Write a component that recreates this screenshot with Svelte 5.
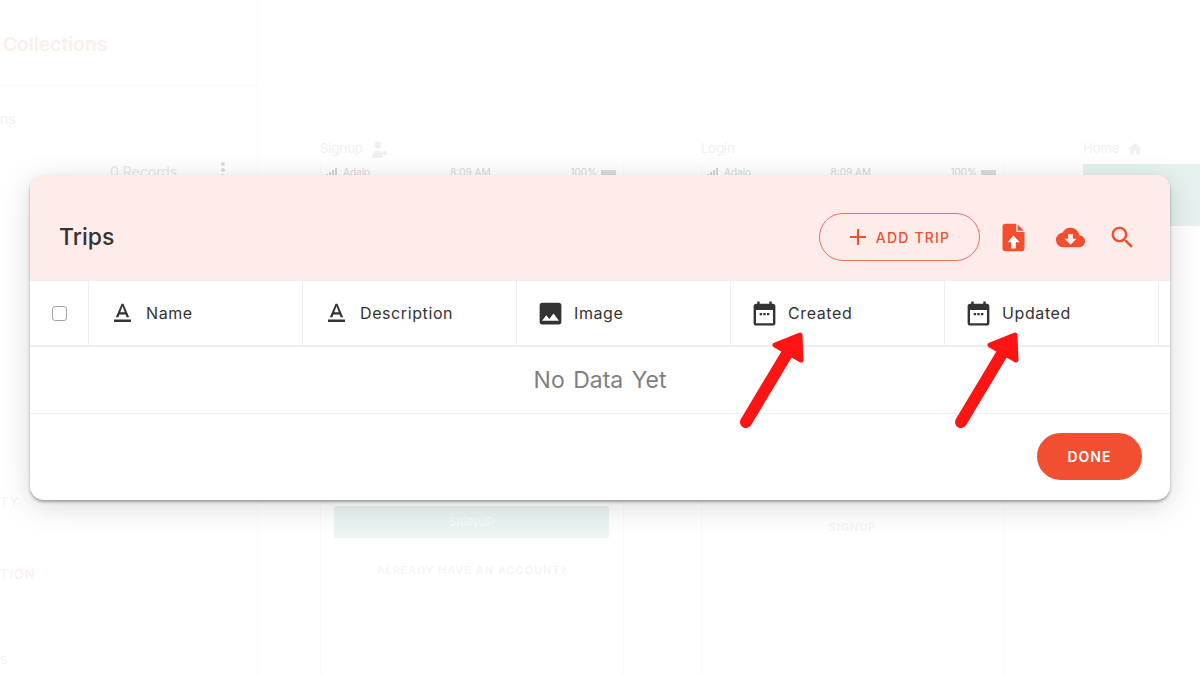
<script>
  const columns = [
    { label: 'Name', icon: 'text' },
    { label: 'Description', icon: 'text' },
    { label: 'Image', icon: 'image' },
    { label: 'Created', icon: 'date' },
    { label: 'Updated', icon: 'date' }
  ];
</script>

{#snippet status()}
  <div class="status">
    <span class="carrier">
      <svg width="13" height="8" viewBox="0 0 13 8" fill="#d4d4d4"><path d="M0 6h2v2H0zM3 4h2v4H3zM6 2h2v6H6zM9 0h2v8H9z"/></svg>
      Adalo
    </span>
    <span>8:09 AM</span>
    <span class="battery">100% <i></i></span>
  </div>
{/snippet}

<div class="page">
  <!-- washed out builder behind the modal -->
  <div class="backdrop">
    <aside class="sidebar">
      <div class="side-title">Collections</div>
      <div class="side-sub">ns</div>
      <div class="side-records">0 Records <span class="kebab"></span></div>
      <div class="side-red ty">TY</div>
      <div class="side-red tion">TION</div>
      <div class="side-sub s">S</div>
    </aside>
    <div class="canvas">
      <section class="screen signup">
        <div class="screen-name">
          Signup
          <svg width="18" height="18" viewBox="0 0 18 18" fill="#f0f0f0"><circle cx="7" cy="4" r="3.4"/><path d="M1 17c0-5 2.500-7.500 6-7.500S12 12 12 17z"/><circle cx="14" cy="12" r="2.500"/></svg>
        </div>
        <div class="frame">
          {@render status()}
          <div class="teal-btn">SIGNUP</div>
          <div class="ghost">ALREADY HAVE AN ACCOUNT?</div>
        </div>
      </section>
      <section class="screen login">
        <div class="screen-name">Login</div>
        <div class="frame">
          {@render status()}
          <div class="ghost login-signup">SIGNUP</div>
        </div>
      </section>
      <section class="screen home">
        <div class="screen-name">
          Home
          <svg width="16" height="16" viewBox="0 0 24 24" fill="#f0f0f0"><path d="M10 20v-6h4v6h5v-8h3L12 3 2 12h3v8z"/></svg>
        </div>
        <div class="frame home-frame"><div class="home-bar"></div></div>
      </section>
    </div>
  </div>

  <div class="overlay">
    <div class="modal">
      <header class="modal-head">
        <h2>Trips</h2>
        <button class="add">
          <svg width="18" height="18" viewBox="0 0 18 18"><path d="M9 1v16M1 9h16" stroke="currentColor" stroke-width="2" fill="none"/></svg>
          <span>ADD TRIP</span>
        </button>
        <svg class="act upload" width="33" height="33" viewBox="0 0 24 24">
          <path d="M14 2H6c-1.100 0-2 .9-2 2v16c0 1.100.9 2 2 2h12c1.100 0 2-.9 2-2V8h-6V2z" fill="#f34e2e"/>
          <path d="M15 2.500V7h4.500z" fill="#f34e2e"/>
          <path d="M12 10.500 7.600 15.500h2.700V20h3.400v-4.500h2.700z" fill="#fff"/>
        </svg>
        <svg class="act cloud" width="29" height="29" viewBox="0 0 24 24">
          <path d="M19.350 10.040C18.670 6.590 15.640 4 12 4 9.110 4 6.600 5.640 5.350 8.040 2.340 8.360 0 10.910 0 14c0 3.310 2.690 6 6 6h13c2.760 0 5-2.240 5-5 0-2.640-2.050-4.780-4.650-4.960zM17 13l-5 5-5-5h3V9h4v4h3z" fill="#f34e2e"/>
        </svg>
        <svg class="act search" width="29" height="29" viewBox="0 0 24 24">
          <path d="M15.500 14h-.79l-.28-.27C15.410 12.590 16 11.110 16 9.500 16 5.910 13.090 3 9.500 3S3 5.910 3 9.500 5.910 16 9.500 16c1.610 0 3.090-.59 4.230-1.570l.27.28v.79l5 4.990L20.490 19l-4.990-5zm-6 0C7.010 14 5 11.990 5 9.500S7.010 5 9.500 5 14 7.010 14 9.500 11.990 14 9.500 14z" fill="#f34e2e"/>
        </svg>
      </header>

      <div class="cols">
        <div class="check-cell"><span class="check"></span></div>
        {#each columns as col}
          <div class="col">
            <svg width="29" height="29" viewBox="0 0 24 24" fill="#333">
              {#if col.icon === 'text'}
                <path d="M5 17v2h14v-2H5zm4.500-4.200h5l.9 2.200h2.100L12.750 4h-1.500L6.500 15h2.100l.9-2.200zM12 5.980 13.870 11h-3.740L12 5.980z"/>
              {:else if col.icon === 'image'}
                <path d="M21 19V5c0-1.100-.9-2-2-2H5c-1.100 0-2 .9-2 2v14c0 1.100.9 2 2 2h14c1.100 0 2-.9 2-2zM8.500 13.500l2.500 3.010L14.500 12l4.500 6H5l3.500-4.500z"/>
              {:else}
                <path d="M19 4h-1V2h-2v2H8V2H6v2H5c-1.110 0-2 .9-2 2v14c0 1.100.89 2 2 2h14c1.100 0 2-.9 2-2V6c0-1.100-.9-2-2-2zm0 16H5V9h14v11z"/>
                <path d="M8 11.500h2v2H8zM11 11.500h2v2h-2zM14 11.500h2v2h-2z"/>
              {/if}
            </svg>
            <span>{col.label}</span>
          </div>
        {/each}
      </div>

      <div class="empty">No Data Yet</div>

      <footer class="modal-foot">
        <button class="done">DONE</button>
      </footer>
    </div>
  </div>

  <!-- annotation arrows drawn over the screenshot -->
  <svg class="arrows" width="1200" height="675" viewBox="0 0 1200 675">
    <g fill="#ff1414" stroke="#ff1414" stroke-linejoin="round" stroke-linecap="round">
      <path d="M746 422 788 352" stroke-width="12" fill="none"/>
      <path d="M775 345 800 335 801 360z" stroke-width="5"/>
      <path d="M961 422 1003 352" stroke-width="12" fill="none"/>
      <path d="M990 345 1015 335 1016 360z" stroke-width="5"/>
    </g>
  </svg>
</div>

<style>
  :global(body) { margin: 0; background: #fff; }
  .page { position: relative; width: 1200px; height: 675px; overflow: hidden; background: #fff; font-family: Inter, "Liberation Sans", sans-serif; }

  .backdrop { display: flex; height: 100%; color: #f1f1f1; }
  .sidebar { width: 257px; flex: none; border-right: 1px solid #fafafa; display: flex; flex-direction: column; }
  .side-title { height: 85px; line-height: 90px; padding-left: 3px; font-size: 19px; font-weight: 600; letter-spacing: .1px; color: #fdeeec; border-bottom: 1px solid #fafafa; }
  .side-sub { margin-top: 24px; font-size: 14px; color: #f0f0f0; }
  .side-records { margin: 36px 0 0 110px; font-size: 14px; display: flex; gap: 44px; color: #e8e8e8; }
  .kebab { width: 4px; height: 4px; margin-top: -1px; border-radius: 50%; background: #ddd; box-shadow: 0 6px 0 #ddd, 0 12px 0 #ddd; }
  .side-red { font-size: 13px; letter-spacing: 1px; color: #fdeeec; }
  .ty { margin-top: 314px; }
  .tion { margin-top: 56px; }
  .s { margin-top: 71px; font-size: 11px; }

  .canvas { flex: 1; display: flex; padding-top: 141px; padding-left: 62px; }
  .screen { flex: none; }
  .signup { width: 304px; margin-right: 77px; }
  .login { width: 303px; margin-right: 79px; }
  .home { width: 200px; }
  .screen-name { height: 23px; display: flex; gap: 8px; align-items: flex-start; font-size: 13px; line-height: 15px; color: #f0f0f0; }
  .frame { height: 520px; border-left: 1px solid #fafafa; border-right: 1px solid #fafafa; display: flex; flex-direction: column; }
  .status { display: flex; justify-content: space-between; padding: 2px 7px 0 5px; font-size: 10px; color: #d8d8d8; }
  .carrier, .battery { display: flex; align-items: center; gap: 4px; }
  .battery i { width: 15px; height: 5px; background: #dcdcdc; }
  .teal-btn { margin: 328px 14px 0 13px; height: 32px; line-height: 32px; text-align: center; background: #e9f4f3; color: #fafafa; font-size: 12px; border-radius: 2px; }
  .ghost { margin-top: 25px; text-align: center; font-size: 11px; font-weight: 500; letter-spacing: 1px; color: #f4f4f4; }
  .login-signup { margin-top: 342px; }
  .home-frame { border: 0; }
  .home-bar { height: 62px; background: #e6f2f0; }

  .overlay { position: absolute; inset: 0; padding: 175px 30px 0; }
  .modal { height: 325px; border-radius: 14px; overflow: hidden; background: #fff; display: flex; flex-direction: column; box-shadow: 0 2px 3px rgba(0,0,0,.32), 0 6px 30px rgba(0,0,0,.15); }

  .modal-head { height: 106px; flex: none; display: flex; align-items: center; padding: 19px 0 0 29px; box-sizing: border-box; background: #fdeceA; border-bottom: 1px solid #f1eeee; }
  h2 { margin: 0 auto 0 0; font-size: 23px; font-weight: 500; color: #333; }
  .add { width: 161px; height: 48px; display: flex; align-items: center; justify-content: center; gap: 9px; border: 1.5px solid #f4705a; border-radius: 24px; background: transparent; color: #f34e2e; font: 500 14px Inter, "Liberation Sans", sans-serif; letter-spacing: 1.2px; padding: 0; }
  .act { flex: none; }
  .upload { margin-left: 17px; }
  .cloud { margin-left: 26px; }
  .search { margin-left: 23px; margin-right: 33px; }

  .cols { height: 66px; flex: none; display: flex; border-bottom: 2px solid #eceded; box-sizing: border-box; }
  .check-cell { width: 59px; display: flex; align-items: center; justify-content: center; border-right: 1px solid #eee; box-sizing: border-box; }
  .check { width: 15px; height: 15px; border: 1.5px solid #a3a3a3; border-radius: 3px; box-sizing: border-box; }
  .col { width: 214px; display: flex; align-items: center; gap: 9px; padding-left: 19px; border-right: 1px solid #eee; box-sizing: border-box; font-size: 16px; color: #333; letter-spacing: .6px; }

  .empty { height: 67px; flex: none; display: flex; align-items: center; justify-content: center; border-bottom: 1px solid #eee; box-sizing: border-box; font-size: 23px; color: #7f7f7f; word-spacing: 2px; }

  .modal-foot { flex: 1; display: flex; justify-content: flex-end; align-items: flex-start; padding: 19px 28px 0 0; }
  .done { width: 105px; height: 47px; border: 0; border-radius: 24px; background: #f24e30; color: #fff; font: 600 14px Inter, "Liberation Sans", sans-serif; letter-spacing: 1px; padding: 0; }

  .arrows { position: absolute; inset: 0; pointer-events: none; }
</style>
